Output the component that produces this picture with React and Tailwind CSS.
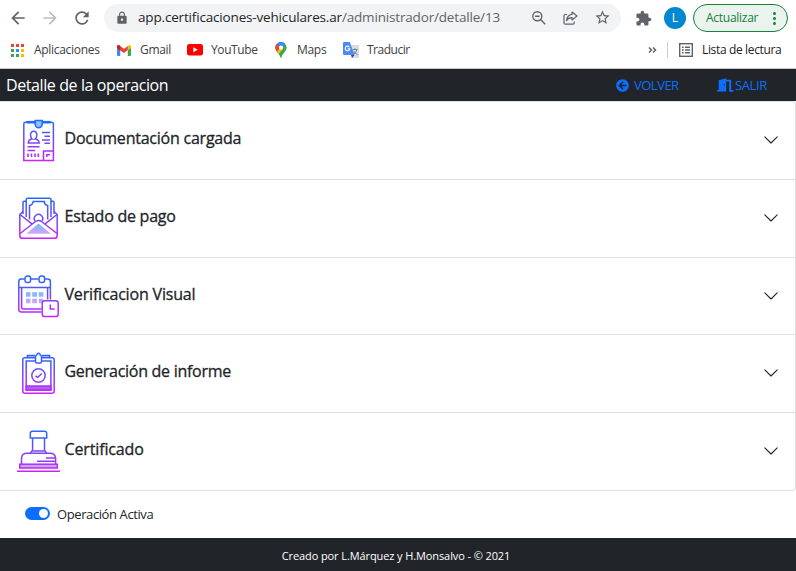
import { FaArrowCircleLeft } from "react-icons/fa";
import { MdArrowBack, MdArrowForward, MdRefresh, MdLock, MdExtension, MdStarBorder } from "react-icons/md";

function GradientIcon({ id, children }) {
  return (
    <svg viewBox="0 0 43 43" className="h-[43px] w-[43px] shrink-0" fill="none" stroke={`url(#${id})`} strokeWidth="1.5">
      <defs>
        <linearGradient id={id} gradientUnits="userSpaceOnUse" x1="0" y1="0" x2="0" y2="43">
          <stop offset="0" stopColor="#1f6bff" />
          <stop offset="0.5" stopColor="#7548f5" />
          <stop offset="1" stopColor="#d01fff" />
        </linearGradient>
        <linearGradient id={`${id}-soft`} x1="0" y1="0" x2="0" y2="1">
          <stop offset="0" stopColor="#72bcff" />
          <stop offset="1" stopColor="#d2a5f8" />
        </linearGradient>
      </defs>
      {children}
    </svg>
  );
}

function DocumentIcon() {
  return (
    <GradientIcon id="doc">
      <path d="M13 3.2H8.5Q6.8 3.2 6.8 5V41.6H36.4V5Q36.4 3.2 34.6 3.2H30" />
      <path d="M9.5 3.2H33.5" stroke="#1f6bff" strokeWidth="2.6" />
      <path d="M18.2 1.4H25.2V5.2A3.5 3.5 0 0 1 18.2 5.2Z" fill="#8fc0fb" stroke="#1f6bff" />
      <path d="M16.7 12.2A3.2 3.6 0 0 1 19.9 16Q19.6 19.2 18.3 20Q22 20.6 22.2 24H11.2Q11.4 20.6 15 20Q13.8 19 13.5 16A3.2 3.6 0 0 1 16.7 12.2Z" />
      <path d="M25 13.6H33M27.5 17.3H33M25 21H33M27.5 24.2H33M10.5 27.7H22.5M10.5 31.4H18" />
      <path d="M11 34.5V38M14.5 34.5V38M18 34.5V38M21.3 34.5V38" strokeWidth="1.6" />
      <path d="M26.5 41V32H36M29.8 38V35.8H33" />
    </GradientIcon>
  );
}

function PaymentIcon() {
  return (
    <GradientIcon id="pay">
      <path d="M6 17V5.4Q6 4.3 7 4.3H9.2V2.7Q9.2 1.2 10.8 1.2H32.5Q34 1.2 34 2.7V4.3H36Q37 4.3 37 5.4V17" />
      <path d="M9.2 4V20M34 4V20" />
      <path d="M12.5 22.5V8.5Q15.6 8 16.2 4.6H27.3Q27.6 8 30.7 8.5V22.5" />
      <path d="M18 24A4.2 4.2 0 1 1 25 24" />
      <path d="M6 14.5L2.8 17.5V38.4Q2.8 41.3 5.5 41.3H37.7Q40.2 41.3 40.2 38.4V17.5L37 14.5" />
      <path d="M3 17.5L15.5 27.3M40 17.5L27.5 27.3M3.2 36.5L18.5 24.5Q21.5 22.5 24.5 24.5L40 36.5" />
      <path d="M21.5 26.5L34 36.7H9.3Z" fill="url(#pay-soft)" stroke="none" />
    </GradientIcon>
  );
}

function CalendarIcon() {
  return (
    <GradientIcon id="cal">
      <path d="M7.5 4H4.2Q1.8 4 1.8 6.5V34.3Q1.8 37 4.2 37H24.5M14 4H21.5M28 4H30.8Q33.4 4 33.4 6.5V24.5M2 12.4H33.3" />
      <path d="M4.6 12.5V32.5Q4.6 34 6.2 34H24.5M30.6 12.5V24.5" />
      <rect x="8" y="1" width="5.6" height="6.5" rx="2.3" />
      <rect x="22" y="1" width="5.6" height="6.5" rx="2.3" />
      <path d="M9 17.3H13.5V21.8H9ZM15.2 17.3H20V21.8H15.2ZM21.7 17.3H26.3V21.8H21.7ZM9 23.7H13.5V28.3H9ZM15.2 23.7H20V28.3H15.2ZM21.7 23.7H26.3V28.3H21.7Z" fill="url(#cal-soft)" stroke="none" />
      <rect x="25.2" y="25.7" width="16" height="15.8" rx="2.6" fill="white" />
      <path d="M33.3 29.5V34H37.7" />
    </GradientIcon>
  );
}

function ReportIcon() {
  return (
    <GradientIcon id="rep">
      <path d="M18 5.8H8Q5.8 5.8 5.8 8V39Q5.8 41.3 8 41.3H35Q37.2 41.3 37.2 39V8Q37.2 5.8 35 5.8H25" />
      <path d="M10.5 5.5V3.6H18M25 3.6H32.5V5.5" strokeWidth="1.7" />
      <path d="M18 8.9H9.2V38.1H33.9V8.9H25" />
      <path d="M9.2 34H33.9V38.1H9.2Z" fill="#b45cf5" />
      <path d="M18.5 9.8V4.4Q18.8 3.3 19.8 3Q20 1.2 21.5 1.2T23.2 3Q24.2 3.3 24.5 4.4V9.8Q24.5 11 23.2 11H19.8Q18.5 11 18.5 9.8Z" />
      <circle cx="21.5" cy="23.5" r="6.7" />
      <path d="M18.5 23.8L20.6 25.5L24.8 21.5" />
    </GradientIcon>
  );
}

function StampIcon() {
  return (
    <GradientIcon id="stamp">
      <path d="M13.3 8V3.5Q13.3 1.3 15.5 1.3H27.5Q29.7 1.3 29.7 3.5V8Z" />
      <path d="M15.6 8V20.7M27.5 8V20.7" />
      <path d="M13.5 23L14.8 20.9H28.2L29.6 23" />
      <path d="M4.5 34V28.3Q4.8 23.2 10 23.2H33Q38.3 23.2 38.6 28.3V34" />
      <path d="M29 28H38M20 31.2H38" />
      <rect x="2.8" y="34.2" width="37.5" height="3.8" fill="#c9a5f8" />
      <path d="M0 41.25H43" stroke="#c724f5" />
    </GradientIcon>
  );
}

const sections = [
  { title: "Documentación cargada", Icon: DocumentIcon, height: "h-[78px]", tracking: "tracking-[-0.23px]" },
  { title: "Estado de pago", Icon: PaymentIcon, height: "h-[78px]", tracking: "tracking-[-0.25px]" },
  { title: "Verificacion Visual", Icon: CalendarIcon, height: "h-[77px]", tracking: "tracking-[-0.18px]" },
  { title: "Generación de informe", Icon: ReportIcon, height: "h-[78px]", tracking: "tracking-[-0.28px]" },
  { title: "Certificado", Icon: StampIcon, height: "h-[78px]", tracking: "tracking-[-0.14px]" },
];

function AppsIcon() {
  return (
    <svg viewBox="0 0 13 13" className="h-[13px] w-[13px]">
      <path d="M0 0h3v3H0zM5 0h3v3H5zM10 0h3v3h-3z" fill="#ea4335" />
      <path d="M0 5h3v3H0zM0 10h3v3H0zM5 10h3v3H5z" fill="#34a853" />
      <path d="M5 5h3v3H5z" fill="#2196f3" />
      <path d="M10 5h3v3h-3zM10 10h3v3h-3z" fill="#fbbc04" />
    </svg>
  );
}

function GmailIcon() {
  return (
    <svg viewBox="0 0 14 11" className="h-[11px] w-[14px]">
      <path d="M0 2L3.2 4.3V11H1Q0 11 0 10Z" fill="#4285f4" />
      <path d="M14 2L10.8 4.3V11H13Q14 11 14 10Z" fill="#34a853" />
      <path d="M10.8 .9Q13.9-1.1 14 1.8V3L10.8 5.6Z" fill="#fbbc04" />
      <path d="M0 3V1.8Q.1-1.1 3.2 .9L7 3.8L10.8 .9V5L7 8L3.2 5.4Z" fill="#ea4335" />
      <path d="M0 3V1.8Q.1-.5 2.2 .3L3.2 .9V5.4Z" fill="#c5221f" />
    </svg>
  );
}

function YouTubeIcon() {
  return (
    <svg viewBox="0 0 16 12" className="h-[12px] w-[16px]">
      <rect width="16" height="11.5" rx="2.5" fill="#f00" />
      <path d="M6.3 3.3L10.7 5.8L6.3 8.3Z" fill="white" />
    </svg>
  );
}

function MapsIcon() {
  return (
    <svg viewBox="0 0 12 16" className="h-[16px] w-[12px]">
      <path d="M6 0A5.6 5.6 0 0 1 11.6 5.6C11.6 10 7.2 11 6.6 15.3Q6 16.6 5.4 15.3C5 12.5 .4 10 .4 5.6A5.6 5.6 0 0 1 6 0Z" fill="#34a853" />
      <path d="M1.8 9.8Q.4 7.8 .4 5.6Q.4 3.6 1.7 2L6 5.6Z" fill="#ea4335" />
      <path d="M1.8 9.8L6 5L8 7L3.6 12Q2.5 11 1.8 9.8Z" fill="#fbbc04" />
      <path d="M1.7 2A5.6 5.6 0 0 1 10.4 2L6 7Z" fill="#4285f4" />
      <path d="M1.7 2L4.4 4.3L2.4 7.5L.5 6.6Q.2 3.6 1.7 2Z" fill="#ea4335" />
      <circle cx="6" cy="5.6" r="2.1" fill="white" />
    </svg>
  );
}

function TranslateIcon() {
  return (
    <svg viewBox="0 0 16 16" className="h-[16px] w-[16px]">
      <path d="M5 3H15Q16 3 16 4V15Q16 16 15 16H9Z" fill="#dadce0" />
      <path d="M8 13H11.5L9 16Z" fill="#2a3fb5" />
      <path d="M1 0H6.8L11.5 13H1Q0 13 0 12V1Q0 0 1 0Z" fill="#4c8bf5" />
      <path d="M6.4 5.1A2.3 2.3 0 1 0 6.8 6.8H4.7" stroke="white" strokeWidth="1.1" fill="none" />
      <path d="M9.5 7.5H14.5M12 6.3V7.5M13.8 7.5Q13 11 10.5 12.5M10.5 8.8Q11.5 11 14.5 12.8" stroke="#607d8b" strokeWidth=".9" fill="none" />
    </svg>
  );
}

function ZoomOutIcon() {
  return (
    <svg viewBox="0 0 14 14" className="h-[14px] w-[14px]" fill="none" stroke="#5f6368" strokeWidth="1.4">
      <circle cx="5.3" cy="5.3" r="4.5" />
      <path d="M3 5.3H7.6M8.6 8.6L13.2 13.2" />
    </svg>
  );
}

function ShareIcon() {
  return (
    <svg viewBox="0 0 15 14" className="h-[14px] w-[15px]" fill="none" stroke="#5f6368" strokeWidth="1.2">
      <path d="M4 3.5H2.2Q1 3.5 1 4.7V12Q1 13.2 2.2 13.2H10Q11.2 13.2 11.2 12V10.5" />
      <path d="M9 1L14 5L9 9V6.7Q5.5 6.5 3.5 9.7Q4 4 9 3.3Z" strokeLinejoin="round" />
    </svg>
  );
}

function ReadingListIcon() {
  return (
    <svg viewBox="0 0 14 14" className="h-[14px] w-[14px]" fill="none" stroke="#5f6368" strokeWidth="1.4">
      <rect x=".7" y=".7" width="12.6" height="12.6" />
      <path d="M3 4.2H4.7M3 7H4.7M3 9.8H4.7M6 4.2H11M6 7H11M6 9.8H11" />
    </svg>
  );
}

function DoorIcon() {
  return (
    <svg viewBox="0 0 17 14" className="h-[14px] w-[17px]" fill="#0d6efd">
      <path d="M0 12H1.7V2.2L9.2 .2V13.6H0ZM6.8 6.3V7.8H7.8V6.3Z" fillRule="evenodd" />
      <path d="M9 1.7H14.2V12H16.4V13.7H12.2V3.6H9Z" />
    </svg>
  );
}

function Chevron() {
  return (
    <svg viewBox="0 0 14 8" className="mb-px h-[8px] w-[14px]" fill="none" stroke="#212529" strokeWidth="1.1" strokeLinecap="round" strokeLinejoin="round">
      <path d="M.8 .8L7 7L13.2 .8" />
    </svg>
  );
}

export default function App() {
  return (
    <div className="flex h-[571px] w-[796px] flex-col overflow-hidden bg-white font-['Open_Sans','Noto_Sans',sans-serif] text-[#212529]">
      <div className="flex h-9 shrink-0 items-center">
        <MdArrowBack className="ml-[8px] h-5 w-5 text-[#5f6368]" />
        <MdArrowForward className="ml-[12px] h-5 w-5 text-[#babcbe]" />
        <MdRefresh className="ml-[12px] h-5 w-5 text-[#5f6368]" />
        <div className="ml-[12px] mt-[-1px] flex h-7 w-[517px] items-center rounded-full bg-[#f1f3f4]">
          <MdLock className="ml-[11px] h-[14px] w-[14px] text-[#5f6368]" />
          <div className="ml-[9px] w-[394px] whitespace-nowrap text-[13.5px] tracking-[-0.17px]">
            <span>app.certificaciones-vehiculares.ar</span>
            <span className="text-[#5f6368]">/administrador/detalle/13</span>
          </div>
          <ZoomOutIcon />
          <div className="ml-[17px]"><ShareIcon /></div>
          <MdStarBorder className="ml-[16px] h-[17px] w-[17px] text-[#5f6368]" />
        </div>
        <MdExtension className="ml-[14px] h-[17px] w-[17px] text-[#5f6368]" />
        <div className="ml-[12px] flex h-[22px] w-[22px] items-center justify-center rounded-full bg-[#0288d1] text-[12px] text-white">L</div>
        <div className="ml-[7px] flex h-7 w-[95px] items-center rounded-full border border-[#188038] bg-[#eaf3ed] pl-[12px] text-[12px] text-[#188038]">
          <span className="w-[62px] whitespace-nowrap tracking-[-0.27px]">Actualizar</span>
          <svg viewBox="0 0 3 13" className="ml-[5px] h-[13px] w-[3px]" fill="#188038">
            <circle cx="1.5" cy="1.5" r="1.5" /><circle cx="1.5" cy="6.5" r="1.5" /><circle cx="1.5" cy="11.5" r="1.5" />
          </svg>
        </div>
      </div>

      <div className="flex h-[32px] shrink-0 items-center pb-[4px] text-[12px] tracking-[-0.3px] text-[#3c4043]">
        <div className="ml-[11px]"><AppsIcon /></div>
        <span className="ml-[10px] w-[83px] whitespace-nowrap">Aplicaciones</span>
        <GmailIcon />
        <span className="ml-[9px] w-[47px] whitespace-nowrap">Gmail</span>
        <YouTubeIcon />
        <span className="ml-[8px] w-[64px] whitespace-nowrap tracking-[-0.4px]">YouTube</span>
        <MapsIcon />
        <span className="ml-[10px] w-[46px] whitespace-nowrap">Maps</span>
        <TranslateIcon />
        <span className="ml-[8px] w-[281px] whitespace-nowrap tracking-[-0.5px]">Traducir</span>
        <svg viewBox="0 0 9 6" className="h-[6px] w-[9px]" fill="none" stroke="#5f6368" strokeWidth="1.5">
          <path d="M1 .5L3.5 3L1 5.5M5 .5L7.5 3L5 5.5" />
        </svg>
        <div className="ml-[10px] h-4 w-px bg-[#c9cbcf]" />
        <div className="ml-[11px]"><ReadingListIcon /></div>
        <span className="ml-[9px] whitespace-nowrap tracking-[-0.35px] text-[#202124]">Lista de lectura</span>
      </div>

      <div className="flex h-[33px] shrink-0 items-center border-t border-[#c8c9cb] bg-[#212529] text-[#0d6efd]">
        <span className="ml-[6px] w-[610px] whitespace-nowrap text-[16px] tracking-[-0.4px] text-white">Detalle de la operacion</span>
        <FaArrowCircleLeft className="h-[13px] w-[13px]" />
        <span className="ml-[5px] w-[83px] whitespace-nowrap pt-[2px] text-[13px] tracking-[-0.5px]">VOLVER</span>
        <DoorIcon />
        <span className="ml-px whitespace-nowrap pt-[2px] text-[13px] tracking-[-0.4px]">SALIR</span>
      </div>

      <div className="shrink-0 rounded-r border-r border-t border-[#dfdfdf]">
        {sections.map(({ title, Icon, height, tracking }) => (
          <div key={title} className={`flex items-center border-b border-[#dfdfdf] pl-[17px] pr-[17px] last:rounded-br ${height}`}>
            <Icon />
            <span className={`ml-[4.5px] grow whitespace-nowrap pb-[5px] text-[16px] [-webkit-text-stroke:0.3px_#212529] ${tracking}`}>{title}</span>
            <Chevron />
          </div>
        ))}
      </div>

      <div className="flex h-[47px] shrink-0 items-center pl-[25px]">
        <div className="mb-[2px] flex h-[13px] w-[25px] items-center justify-end rounded-full bg-[#0d6efd] pr-[2px]">
          <div className="h-[9px] w-[9px] rounded-full bg-white" />
        </div>
        <span className="ml-[7px] whitespace-nowrap text-[13px] tracking-[-0.4px]">Operación Activa</span>
      </div>

      <div className="flex grow items-center justify-center bg-[#212529] pr-[4px] pt-[3px] text-[11px] tracking-[-0.1px] text-white">
        <span className="whitespace-nowrap">Creado por L.Márquez y H.Monsalvo - © 2021</span>
      </div>
    </div>
  );
}
